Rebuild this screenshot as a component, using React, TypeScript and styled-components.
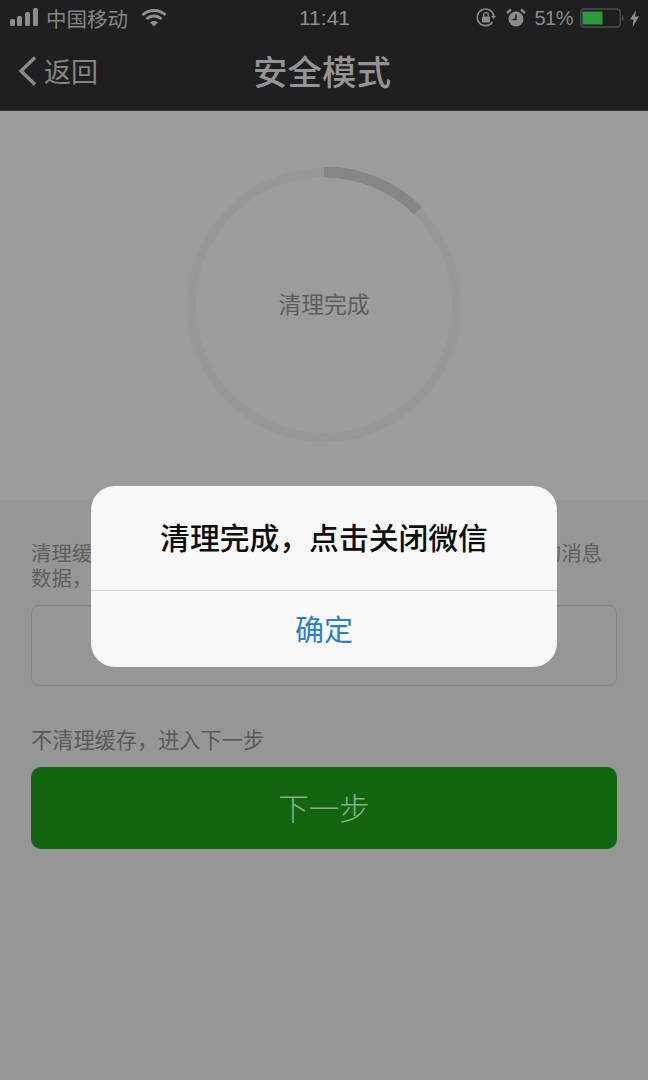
import styled, { createGlobalStyle } from "styled-components";

const GlobalStyle = createGlobalStyle`
  html, body {
    margin: 0;
    padding: 0;
    background: #969696;
  }

  body {
    font-family: "Noto Sans CJK SC", "Liberation Sans", sans-serif;
  }

  * {
    box-sizing: border-box;
  }
`;

const Page = styled.div`
  position: relative;
  width: 648px;
  height: 1080px;
  overflow: hidden;
  background-color: #969696;
`;

/* top dark area */
const Header = styled.header`
  height: 111px;
  background-color: #1f1f21;
  border-bottom: 1px solid #38383a;
  color: #8f8f8f;
`;

const StatusBar = styled.div`
  height: 36px;
  padding: 0 9px 0 10px;
  display: grid;
  grid-template-columns: 1fr auto 1fr;
  align-items: center;
`;

const StatusLeft = styled.div`
  display: flex;
  align-items: center;
  gap: 8px;
`;

const StatusRight = styled.div`
  display: flex;
  align-items: center;
  justify-content: flex-end;
`;

const Carrier = styled.span`
  margin-right: 5px;
  font-size: 20.5px;
  line-height: 36px;
  color: #868686;
`;

const Clock = styled.span`
  font-family: "Liberation Sans", sans-serif;
  font-size: 21px;
  color: #8f8f8f;
`;

const Percent = styled.span`
  margin: 0 7px 0 8px;
  font-family: "Liberation Sans", sans-serif;
  font-size: 20px;
  letter-spacing: -0.5px;
  color: #8a8a8a;
`;

const AlarmSvg = styled.svg`
  margin-left: 10px;
`;

const BoltSvg = styled.svg`
  margin-left: 6px;
`;

const NavBar = styled.div`
  height: 74px;
  padding: 0 4px 6px 0;
  display: grid;
  grid-template-columns: 1fr auto 1fr;
  align-items: center;
`;

const Back = styled.div`
  margin-left: 18px;
  padding-top: 1px;
  display: flex;
  align-items: center;
  gap: 6px;
  font-size: 27px;
  color: #858585;
`;

const NavTitle = styled.h1`
  margin: 0;
  font-size: 34.5px;
  font-weight: 500;
  color: #949494;
`;

/* progress ring */
const RingSection = styled.section`
  height: 389px;
  padding-top: 56px;
  display: flex;
  justify-content: center;
  background-color: #9c9c9c;
`;

const RingBox = styled.div`
  position: relative;
  width: 276px;
  height: 276px;
`;

const RingLabel = styled.div`
  position: absolute;
  inset: 0;
  padding-bottom: 4px;
  display: flex;
  align-items: center;
  justify-content: center;
  font-size: 22.8px;
  color: #5c5c5c;
`;

const Content = styled.section`
  padding: 40px 31px 0;
`;

const NoticeLine = styled.div`
  width: 571px;
  display: flex;
  justify-content: space-between;
  font-size: 20.4px;
  line-height: 25px;
  color: #5f5f5f;
`;

const OutlineBox = styled.div`
  margin-top: 15px;
  width: 586px;
  height: 81px;
  border: 1px solid #858585;
  border-radius: 8px;
`;

const SkipLabel = styled.div`
  margin-top: 38px;
  font-size: 21.2px;
  line-height: 30px;
  color: #5a5a5a;
`;

const NextButton = styled.div`
  margin-top: 13px;
  padding-bottom: 2px;
  width: 586px;
  height: 82px;
  border-radius: 10px;
  background-color: #11660f;
  display: flex;
  align-items: center;
  justify-content: center;
  font-size: 30.5px;
  font-weight: 300;
  color: #8cb088;
`;

/* alert on top of the page */
const Dialog = styled.div`
  position: absolute;
  left: 91px;
  top: 486px;
  width: 466px;
  height: 181px;
  border-radius: 24px;
  background-color: #f8f8f8;
  display: flex;
  flex-direction: column;
`;

const DialogTitle = styled.div`
  height: 105px;
  padding-bottom: 5px;
  border-bottom: 1px solid #d6d6d6;
  display: flex;
  align-items: center;
  justify-content: center;
  font-size: 29.8px;
  font-weight: 500;
  color: #0c0c0c;
`;

const DialogAction = styled.div`
  flex: 1;
  padding-bottom: 2px;
  display: flex;
  align-items: center;
  justify-content: center;
  font-size: 29px;
  color: #2a7fc9;
`;

const SignalIcon = () => (
  <svg width="28" height="20" viewBox="0 0 28 20" fill="#8c8c8c">
    <rect x="0" y="11" width="5" height="7" rx="1.5" />
    <rect x="7" y="8" width="5" height="10" rx="1.5" />
    <rect x="15" y="4" width="5" height="14" rx="1.5" />
    <rect x="23" y="0" width="5" height="18" rx="1.5" />
  </svg>
);

const WifiIcon = () => (
  <svg width="26" height="20" viewBox="0 0 26 20" fill="none" stroke="#8c8c8c" strokeWidth="3">
    <path d="M1.5 7 C8 1 18 1 24.5 7" />
    <path d="M5.5 11 C10 7 16 7 20.5 11" />
    <path d="M13 18.5 L9 14.5 C11 12.6 15 12.6 17 14.5 Z" fill="#8c8c8c" stroke="none" />
  </svg>
);

const RotationLockIcon = () => (
  <svg width="20" height="20" viewBox="0 0 20 20" fill="none">
    <path d="M16.5 14 A8.3 8.3 0 1 1 17.8 8" stroke="#8c8c8c" strokeWidth="1.6" />
    <path d="M15 8 L20 8 L17.5 11 Z" fill="#8c8c8c" />
    <rect x="6" y="8.5" width="8" height="6" rx="1" fill="#8c8c8c" />
    <path d="M7.7 8.5 V7 a2.3 2.3 0 0 1 4.6 0 V8.5" stroke="#8c8c8c" strokeWidth="1.3" />
  </svg>
);

const AlarmIcon = () => (
  <AlarmSvg width="20" height="20" viewBox="0 0 20 20">
    <circle cx="10" cy="11" r="7.5" fill="#8c8c8c" />
    <path d="M10 6.5 V11.5 H6.5" fill="none" stroke="#1f1f21" strokeWidth="1.5" />
    <path d="M1 5 L5 1.5 M19 5 L15 1.5" stroke="#8c8c8c" strokeWidth="2.4" />
  </AlarmSvg>
);

const BatteryIcon = () => (
  <svg width="44" height="20" viewBox="0 0 44 20" fill="none">
    <rect x="0.75" y="1" width="39.5" height="18" rx="3.5" stroke="#4c4c4c" strokeWidth="1.4" />
    <rect x="2.5" y="3.5" width="20" height="13" fill="#2f9a3c" />
    <rect x="42" y="7.5" width="1.5" height="5" fill="#4c4c4c" />
  </svg>
);

const BoltIcon = () => (
  <BoltSvg width="9" height="17" viewBox="0 0 9 17" fill="#8c8c8c">
    <path d="M6 0 L0 9.5 H3.5 L2.5 17 L9 6.5 H5 Z" />
  </BoltSvg>
);

const BackIcon = () => (
  <svg width="20" height="32" viewBox="0 0 20 32" fill="none" stroke="#8a8a8a" strokeWidth="3.4">
    <path d="M17 2.5 L3 16 L17 29.5" />
  </svg>
);

const Ring = () => (
  <svg width="276" height="276" viewBox="0 0 276 276" fill="none">
    <circle cx="138" cy="138" r="132.5" stroke="#979797" strokeWidth="9" />
    <path d="M138 5 A133 133 0 0 1 232 43.7" stroke="#868686" strokeWidth="11" />
  </svg>
);

const App = () => {
  return (
    <Page>
      <GlobalStyle />
      <Header>
        <StatusBar>
          <StatusLeft>
            <SignalIcon />
            <Carrier>中国移动</Carrier>
            <WifiIcon />
          </StatusLeft>
          <Clock>11:41</Clock>
          <StatusRight>
            <RotationLockIcon />
            <AlarmIcon />
            <Percent>51%</Percent>
            <BatteryIcon />
            <BoltIcon />
          </StatusRight>
        </StatusBar>
        <NavBar>
          <Back>
            <BackIcon />
            返回
          </Back>
          <NavTitle>安全模式</NavTitle>
        </NavBar>
      </Header>
      <RingSection>
        <RingBox>
          <Ring />
          <RingLabel>清理完成</RingLabel>
        </RingBox>
      </RingSection>
      <Content>
        <NoticeLine>
          <span>清理缓</span>
          <span>的消息</span>
        </NoticeLine>
        <NoticeLine>
          <span>数据，</span>
        </NoticeLine>
        <OutlineBox />
        <SkipLabel>不清理缓存，进入下一步</SkipLabel>
        <NextButton>下一步</NextButton>
      </Content>
      <Dialog>
        <DialogTitle>清理完成，点击关闭微信</DialogTitle>
        <DialogAction>确定</DialogAction>
      </Dialog>
    </Page>
  );
};

export default App;
